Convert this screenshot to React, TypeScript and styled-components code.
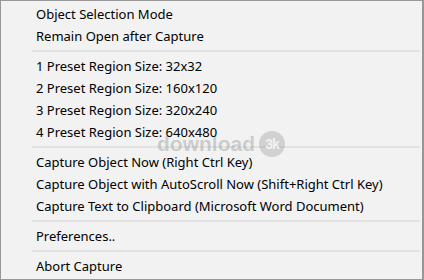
import styled, { createGlobalStyle } from "styled-components";

const GlobalStyle = createGlobalStyle`
  html, body {
    margin: 0;
    padding: 0;
    background: #f2f2f2;
  }
`;

const Menu = styled.div`
  position: relative;
  box-sizing: border-box;
  width: 424px;
  height: 280px;
  padding: 2px 2px 2px 1px;
  background: #f2f2f2;
  border: 1px solid #979797;
  border-right-width: 2px;
  font-family: "Noto Sans", "Liberation Sans", sans-serif;
  font-size: 13px;
  color: #000;
  overflow: hidden;
`;

const Item = styled.div`
  position: relative;
  z-index: 1;
  height: 22px;
  line-height: 22px;
  padding-left: 34px;
  white-space: nowrap;
`;

const Separator = styled.div`
  height: 8px;
  display: flex;
  align-items: center;
  padding-left: 30px;
  &::after {
    content: "";
    flex: 1;
    height: 2px;
    background: #e3e3e3;
  }
`;

const Watermark = styled.div`
  position: absolute;
  left: 156px;
  top: 130px;
  display: flex;
  align-items: center;
  gap: 4px;
  font-family: "Liberation Sans", sans-serif;
  font-weight: bold;
  font-size: 21px;
  color: rgba(110, 110, 110, 0.3);
  pointer-events: none;
`;

const Badge = styled.span`
  display: inline-flex;
  align-items: center;
  justify-content: center;
  width: 26px;
  height: 26px;
  border-radius: 50%;
  background: rgba(110, 110, 110, 0.25);
  color: #f2f2f2;
  font-size: 14px;
  letter-spacing: -1px;
`;

type Entry = string | null;

const entries: Entry[] = [
  "Object Selection Mode",
  "Remain Open after Capture",
  null,
  "1 Preset Region Size: 32x32",
  "2 Preset Region Size: 160x120",
  "3 Preset Region Size: 320x240",
  "4 Preset Region Size: 640x480",
  null,
  "Capture Object Now (Right Ctrl Key)",
  "Capture Object with AutoScroll Now (Shift+Right Ctrl Key)",
  "Capture Text to Clipboard (Microsoft Word Document)",
  null,
  "Preferences..",
  null,
  "Abort Capture",
];

export default function App() {
  return (
    <>
      <GlobalStyle />
      <Menu>
        {entries.map((e, i) =>
          e === null ? <Separator key={i} /> : <Item key={i}>{e}</Item>
        )}
        <Watermark aria-hidden="true">
          download<Badge>3k</Badge>
        </Watermark>
      </Menu>
    </>
  );
}
